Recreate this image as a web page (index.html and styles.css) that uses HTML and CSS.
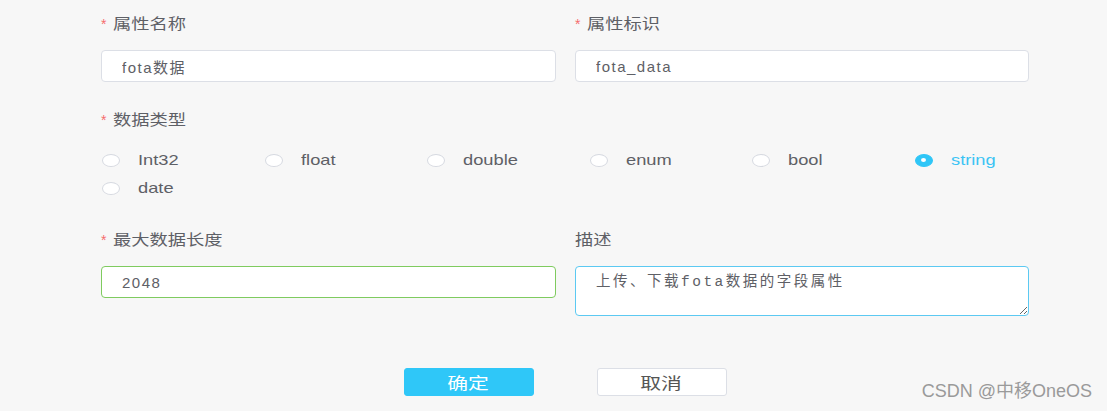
FILE: index.html
```html
<!DOCTYPE html>
<html lang="zh">
<head>
<meta charset="utf-8">
<title>属性</title>
<link rel="stylesheet" href="styles.css">
</head>
<body>
<div class="page">
  <form class="form">
    <div class="row item">
      <div class="field">
        <div class="label"><span class="req">*</span><span class="wide">属性名称</span></div>
        <input class="input" type="text" value="fota数据">
      </div>
      <div class="field">
        <div class="label"><span class="req">*</span><span class="wide">属性标识</span></div>
        <input class="input" type="text" value="fota_data">
      </div>
    </div>

    <div class="item">
      <div class="label"><span class="req">*</span><span class="wide">数据类型</span></div>
      <div class="radios">
        <label class="radio"><span class="dot"></span><span class="rtext wide">Int32</span></label>
        <label class="radio"><span class="dot"></span><span class="rtext wide">float</span></label>
        <label class="radio"><span class="dot"></span><span class="rtext wide">double</span></label>
        <label class="radio"><span class="dot"></span><span class="rtext wide">enum</span></label>
        <label class="radio"><span class="dot"></span><span class="rtext wide">bool</span></label>
        <label class="radio checked"><span class="dot"></span><span class="rtext wide">string</span></label>
        <label class="radio"><span class="dot"></span><span class="rtext wide">date</span></label>
      </div>
    </div>

    <div class="row item-last">
      <div class="field">
        <div class="label"><span class="req">*</span><span class="wide">最大数据长度</span></div>
        <input class="input input-ok" type="text" value="2048">
      </div>
      <div class="field">
        <div class="label"><span class="wide">描述</span></div>
        <textarea class="textarea">上传、下载fota数据的字段属性</textarea>
      </div>
    </div>

    <div class="actions">
      <button type="button" class="btn btn-primary"><span class="btext">确定</span></button>
      <button type="button" class="btn btn-default"><span class="btext">取消</span></button>
    </div>
  </form>
  <div class="watermark">CSDN @中移OneOS</div>
</div>
</body>
</html>
```

FILE: styles.css
```css
* { box-sizing: border-box; }

html, body {
  margin: 0;
  padding: 0;
}

body {
  background: #f7f7f7;
  font-family: "Liberation Sans", "Noto Sans CJK SC", sans-serif;
  color: #5e6066;
}

.page {
  position: relative;
  width: 1107px;
  height: 411px;
  overflow: hidden;
}

.form {
  width: 928px;
  margin-left: 101px;
  padding-top: 14px;
}

.row {
  display: grid;
  grid-template-columns: 455px 454px;
  column-gap: 19px;
  align-items: start;
}

.item {
  margin-bottom: 28px;
}

.item-last {
  margin-bottom: 52px;
}

.wide {
  display: inline-block;
  transform: scaleX(1.26);
  transform-origin: left center;
}

.label {
  display: flex;
  align-items: center;
  height: 20px;
  line-height: 20px;
  font-size: 14.5px;
  color: #5e6066;
  margin-bottom: 16px;
}

.req {
  color: #f56c6c;
  font-size: 14px;
  margin-right: 7px;
}

.input {
  display: block;
  width: 100%;
  height: 32px;
  border: 1px solid #dcdfe6;
  border-radius: 4px;
  background: #fff;
  padding: 0 20px;
  font-family: "Liberation Sans", "Noto Sans CJK SC", sans-serif;
  font-size: 15px;
  letter-spacing: 1.5px;
  color: #5e6066;
  outline: none;
}

.input-ok {
  border-color: #7fcb5f;
}

.textarea {
  display: block;
  width: 100%;
  height: 50px;
  border: 1px solid #5cc9f2;
  border-radius: 4px;
  background: #fff;
  padding: 5px 20px;
  font-family: "Liberation Mono", "Noto Sans CJK SC", monospace;
  font-size: 14.5px;
  line-height: 20px;
  letter-spacing: 2.5px;
  color: #5e6066;
  outline: none;
}

.radios {
  display: grid;
  grid-template-columns: repeat(6, 162.5px);
  grid-auto-rows: 28px;
}

.radio {
  display: flex;
  align-items: center;
  font-size: 14.5px;
  color: #5e6066;
}

.dot {
  position: relative;
  display: block;
  width: 18px;
  height: 13px;
  margin-left: 1px;
  border: 1px solid #d6d9e0;
  border-radius: 50%;
  background: #fff;
}

.rtext {
  margin-left: 18px;
}

.radio.checked .dot {
  background: #2fc6f7;
  border-color: #2fc6f7;
}

.radio.checked .dot::after {
  content: "";
  position: absolute;
  left: 50%;
  top: 50%;
  width: 5px;
  height: 4px;
  margin-left: -2.5px;
  margin-top: -2px;
  border-radius: 50%;
  background: #fff;
}

.radio.checked .rtext {
  color: #3cc4f4;
}

.actions {
  display: flex;
  justify-content: center;
  gap: 63px;
}

.btn {
  width: 130px;
  height: 28px;
  border-radius: 3px;
  font-family: "Liberation Sans", "Noto Sans CJK SC", sans-serif;
  font-size: 16px;
  padding: 0;
  cursor: pointer;
}

.btext {
  display: inline-block;
  transform: scaleX(1.3);
  transform-origin: center center;
}

.btn-primary {
  background: #2fc7f8;
  border: 1px solid #2fc7f8;
  color: #fff;
}

.btn-default {
  background: #fff;
  border: 1px solid #dcdfe6;
  color: #555;
}

.watermark {
  position: absolute;
  right: 15px;
  top: 380px;
  font-size: 18px;
  line-height: 22px;
  color: #9a9a9a;
  font-family: "Liberation Sans", "Noto Sans CJK SC", sans-serif;
}
```
